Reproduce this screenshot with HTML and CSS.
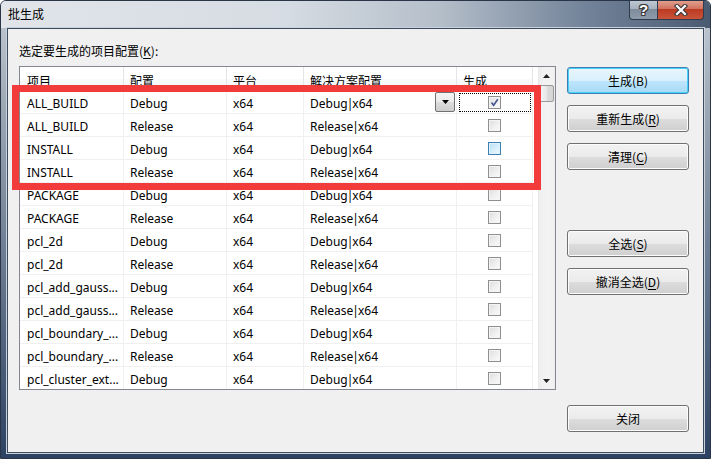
FILE: index.html
```html
<!DOCTYPE html>
<html>
<head>
<meta charset="utf-8">
<link rel="stylesheet" href="styles.css">
</head>
<body>
<div class="window">
  <div class="titlebar">
    <span class="title">批生成</span>
    <div class="caption">
      <div class="cap help">?</div>
      <div class="cap close">
        <svg width="16" height="12" viewBox="0 0 16 12">
          <path d="M4 2 L12 10 M12 2 L4 10" stroke="#3b3b3b" stroke-width="4.4" stroke-linecap="square" fill="none"/>
          <path d="M4 2 L12 10 M12 2 L4 10" stroke="#ffffff" stroke-width="2.2" stroke-linecap="square" fill="none"/>
        </svg>
      </div>
    </div>
  </div>
  <div class="client">
    <div class="main">
      <div class="label">选定要生成的项目配置(<u>K</u>):</div>
      <div class="list">
        <div class="grid">
          <div class="row head">
            <div class="c">项目</div><div class="c">配置</div><div class="c">平台</div><div class="c">解决方案配置</div><div class="c">生成</div>
          </div>
          <div class="row">
            <div class="c">ALL_BUILD</div><div class="c">Debug</div><div class="c">x64</div>
            <div class="c sol">Debug<span class="pipe">|</span>x64<span class="drop"><svg width="7" height="4" viewBox="0 0 7 4"><path d="M0 0 H7 L3.5 4 Z" fill="#000"/></svg></span></div>
            <div class="c chk focus"><span class="box checked"><svg width="11" height="11" viewBox="0 0 11 11"><path d="M2.5 5.5 L4.6 8.2 L8.8 2.2" stroke="#4b5a93" stroke-width="1.7" fill="none"/></svg></span></div>
          </div>
          <div class="row">
            <div class="c">ALL_BUILD</div><div class="c">Release</div><div class="c">x64</div><div class="c">Release<span class="pipe">|</span>x64</div><div class="c chk"><span class="box"></span></div>
          </div>
          <div class="row">
            <div class="c">INSTALL</div><div class="c">Debug</div><div class="c">x64</div><div class="c">Debug<span class="pipe">|</span>x64</div><div class="c chk"><span class="box hover"></span></div>
          </div>
          <div class="row">
            <div class="c">INSTALL</div><div class="c">Release</div><div class="c">x64</div><div class="c">Release<span class="pipe">|</span>x64</div><div class="c chk"><span class="box"></span></div>
          </div>
          <div class="row">
            <div class="c">PACKAGE</div><div class="c">Debug</div><div class="c">x64</div><div class="c">Debug<span class="pipe">|</span>x64</div><div class="c chk"><span class="box"></span></div>
          </div>
          <div class="row">
            <div class="c">PACKAGE</div><div class="c">Release</div><div class="c">x64</div><div class="c">Release<span class="pipe">|</span>x64</div><div class="c chk"><span class="box"></span></div>
          </div>
          <div class="row">
            <div class="c">pcl_2d</div><div class="c">Debug</div><div class="c">x64</div><div class="c">Debug<span class="pipe">|</span>x64</div><div class="c chk"><span class="box"></span></div>
          </div>
          <div class="row">
            <div class="c">pcl_2d</div><div class="c">Release</div><div class="c">x64</div><div class="c">Release<span class="pipe">|</span>x64</div><div class="c chk"><span class="box"></span></div>
          </div>
          <div class="row">
            <div class="c">pcl_add_gauss...</div><div class="c">Debug</div><div class="c">x64</div><div class="c">Debug<span class="pipe">|</span>x64</div><div class="c chk"><span class="box"></span></div>
          </div>
          <div class="row">
            <div class="c">pcl_add_gauss...</div><div class="c">Release</div><div class="c">x64</div><div class="c">Release<span class="pipe">|</span>x64</div><div class="c chk"><span class="box"></span></div>
          </div>
          <div class="row">
            <div class="c">pcl_boundary_...</div><div class="c">Debug</div><div class="c">x64</div><div class="c">Debug<span class="pipe">|</span>x64</div><div class="c chk"><span class="box"></span></div>
          </div>
          <div class="row">
            <div class="c">pcl_boundary_...</div><div class="c">Release</div><div class="c">x64</div><div class="c">Release<span class="pipe">|</span>x64</div><div class="c chk"><span class="box"></span></div>
          </div>
          <div class="row">
            <div class="c">pcl_cluster_ext...</div><div class="c">Debug</div><div class="c">x64</div><div class="c">Debug<span class="pipe">|</span>x64</div><div class="c chk"><span class="box"></span></div>
          </div>
        </div>
        <div class="vscroll">
          <div class="arrow"><svg width="7" height="4" viewBox="0 0 7 4"><path d="M3.5 0 L7 4 H0 Z" fill="#222"/></svg></div>
          <div class="track"><div class="thumb"></div></div>
          <div class="arrow"><svg width="7" height="4" viewBox="0 0 7 4"><path d="M0 0 H7 L3.5 4 Z" fill="#222"/></svg></div>
        </div>
      </div>
    </div>
    <div class="side">
      <div class="group">
        <div class="btn default">生成(B)</div>
        <div class="btn">重新生成(<u>R</u>)</div>
        <div class="btn">清理(<u>C</u>)</div>
      </div>
      <div class="group second">
        <div class="btn">全选(<u>S</u>)</div>
        <div class="btn">撤消全选(<u>D</u>)</div>
      </div>
      <div class="btn last">关闭</div>
    </div>
  </div>
  <div class="redbox"></div>
</div>
</body>
</html>
```

FILE: styles.css
```css
* { box-sizing: border-box; }
html, body { margin: 0; padding: 0; }
body {
  width: 711px;
  height: 459px;
  overflow: hidden;
  background: #ffffff;
  font-family: "Noto Sans", "Noto Sans CJK SC", sans-serif;
  font-size: 12px;
  color: #000;
}
.window {
  position: relative;
  width: 711px;
  height: 459px;
  display: flex;
  flex-direction: column;
  border: 1px solid #2a3547;
  border-radius: 6px 6px 0 0;
  background: linear-gradient(to bottom, #c4ccd5 0%, #a2adb9 20%, #6d7d92 55%, #2d4262 100%);
  overflow: hidden;
}
.titlebar {
  height: 27px;
  flex: none;
  display: flex;
  align-items: flex-start;
  justify-content: space-between;
  padding-left: 7px;
  background: linear-gradient(to right, #e1e5ea 0%, #d6dce3 40%, #b4bec9 62%, #74849a 82%, #4a5a70 100%);
}
.title {
  font-family: "Noto Sans CJK SC", sans-serif;
  font-size: 12px;
  line-height: 26px;
  color: #000;
}
.caption {
  display: flex;
  margin-right: 6px;
  height: 20px;
  margin-top: -1px;
}
.cap {
  height: 20px;
  display: flex;
  align-items: center;
  justify-content: center;
  border: 1px solid #2f3b4c;
  border-top: none;
}
.help {
  width: 28px;
  border-radius: 0 0 0 4px;
  border-right: none;
  background: linear-gradient(to bottom, #c3cbd4 0%, #a7b2bf 45%, #7f8c9c 50%, #8d9aa9 100%);
  color: #fff;
  font-family: "Liberation Sans", sans-serif;
  font-weight: bold;
  font-size: 15px;
  text-shadow: 1px 0 #3a3a3a, -1px 0 #3a3a3a, 0 1px #3a3a3a, 0 -1px #3a3a3a, 1px 1px #3a3a3a, -1px -1px #3a3a3a, 1px -1px #3a3a3a, -1px 1px #3a3a3a;
}
.close {
  width: 47px;
  border-radius: 0 0 4px 0;
  background: linear-gradient(to bottom, #e3a493 0%, #d27360 45%, #bb3a22 50%, #c9553b 100%);
}
.client {
  flex: 1;
  margin: 0 6px 5px 6px;
  border: 1px solid #3d4b5e;
  box-shadow: 0 0 0 1px #c9d2dc;
  background: #f0f0f0;
  display: flex;
  padding: 13px 14px 0 11px;
}
.main {
  width: 537px;
  display: flex;
  flex-direction: column;
}
.label {
  font-family: "Noto Sans CJK SC", sans-serif;
  line-height: 18px;
  height: 18px;
  margin-bottom: 6px;
}
.label u, .btn u { text-decoration: underline; text-underline-offset: 2px; }
.list {
  height: 324px;
  border: 1px solid #828790;
  background: #fff;
  display: flex;
  overflow: hidden;
}
.grid {
  flex: 1;
  overflow: hidden;
}
.row {
  display: grid;
  grid-template-columns: 104px 103px 77px 153px 76px;
  height: 23px;
}
.c {
  position: relative;
  border-right: 1px solid #f0f0f0;
  border-bottom: 1px solid #f0f0f0;
  padding-left: 6px;
  padding-top: 3px;
  line-height: 19px;
  white-space: nowrap;
  overflow: hidden;
}
.c:first-child { padding-left: 7px; }
.pipe { margin: 0 -1px; }
.head { height: 24px; }
.head .c {
  font-family: "Noto Sans CJK SC", sans-serif;
  line-height: 21px;
  border-right: 1px solid #e5e5e5;
  border-bottom: none;
  background: linear-gradient(to bottom, #ffffff 0%, #ffffff 50%, #f9fafb 51%, #f3f4f6 100%);
}
.sol { overflow: visible; }
.drop {
  position: absolute;
  right: 1px;
  top: 1px;
  width: 20px;
  height: 20px;
  border: 1px solid #707070;
  border-radius: 2px;
  background: linear-gradient(to bottom, #f4f4f4 0%, #ebebeb 50%, #dcdcdc 51%, #cfcfcf 100%);
  display: flex;
  align-items: center;
  justify-content: center;
}
.chk {
  display: flex;
  align-items: center;
  justify-content: center;
}
.c.chk { padding: 0 0 0 0; }
.focus { outline: 1px dotted #000; outline-offset: -3px; }
.box {
  width: 13px;
  height: 13px;
  border: 1px solid #8e8f8f;
  background: linear-gradient(135deg, #dcdcdc 0%, #eeeeee 50%, #fbfbfb 100%);
  box-shadow: inset 0 0 0 1px #f4f4f4;
  display: flex;
  align-items: center;
  justify-content: center;
}
.box.checked { background: linear-gradient(135deg, #e2e2e2 0%, #f2f2f2 60%, #fcfcfc 100%); }
.box.hover {
  border-color: #3c7fb1;
  background: linear-gradient(135deg, #b9dff7 0%, #daf0fc 60%, #eef8fe 100%);
  box-shadow: inset 0 0 0 1px #def1fc;
}
.vscroll {
  width: 17px;
  display: flex;
  flex-direction: column;
  background: linear-gradient(to right, #e2e2e2 0px, #eeeeee 1px, #f3f3f3 8px, #f1f1f1 16px, #e8e8e8 17px);
}
.arrow {
  height: 17px;
  display: flex;
  align-items: center;
  justify-content: center;
}
.track {
  flex: 1;
  padding: 1px 1px;
}
.thumb {
  height: 17px;
  border: 1px solid #9a9a9a;
  border-radius: 2px;
  background: linear-gradient(to right, #f3f3f3 0%, #e9e9e9 50%, #dcdcdc 51%, #d5d5d5 100%);
}
.side {
  width: 122px;
  margin-left: 11px;
  display: flex;
  flex-direction: column;
  padding-top: 25px;
  padding-bottom: 20px;
}
.group {
  display: flex;
  flex-direction: column;
  gap: 11px;
}
.group.second { margin-top: 60px; }
.btn {
  height: 27px;
  border: 1px solid #707070;
  border-radius: 3px;
  background: linear-gradient(to bottom, #f2f2f2 0%, #ebebeb 50%, #dddddd 51%, #cfcfcf 100%);
  box-shadow: inset 0 0 0 1px #fcfcfc;
  font-family: "Noto Sans CJK SC", sans-serif;
  font-size: 12px;
  line-height: 25px;
  text-align: center;
  color: #000;
}
.btn.default {
  border-color: #3c7fb1;
  box-shadow: inset 0 0 0 1px #48d1fb;
  background: linear-gradient(to bottom, #eaf6fd 0%, #d9f0fc 50%, #bee6fd 51%, #a7d9f5 100%);
}
.btn.last { margin-top: auto; }
.redbox {
  position: absolute;
  left: 11px;
  top: 84px;
  width: 529px;
  height: 105px;
  border: 7px solid #f23b3b;
}
```
